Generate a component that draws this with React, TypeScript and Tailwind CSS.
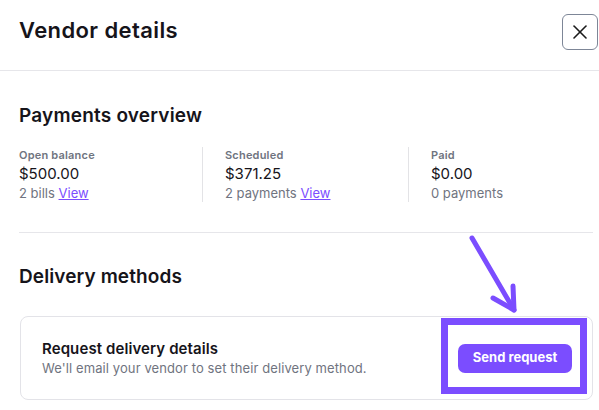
import { X } from "lucide-react";

const stats = [
  { label: "Open balance", amount: "$500.00", sub: "2 bills", link: true },
  { label: "Scheduled", amount: "$371.25", sub: "2 payments", link: true },
  { label: "Paid", amount: "$0.00", sub: "0 payments", link: false },
];

export default function App() {
  return (
    <div className="relative w-[599px] h-[410px] overflow-hidden bg-white text-[#16141a] font-['Inter',sans-serif]">
      {/* Header */}
      <div className="flex items-start justify-between h-[71px] pt-[14px] pl-[19px] pr-[1px] border-b border-[#e6e6ea]">
        <h1 className="text-[22px] font-semibold leading-[32px] tracking-[0.4px]">Vendor details</h1>
        <button className="w-[36px] h-[36px] rounded-[6px] border border-[#7d8697] flex items-center justify-center">
          <X className="w-[24px] h-[24px] text-[#1a1a1a]" strokeWidth={1.6} />
        </button>
      </div>

      <div className="pl-[19px] pr-[6px]">
        {/* Payments overview */}
        <div className="pt-[31px] pb-[30px] border-b border-[#e6e6ea]">
          <h2 className="text-[19px] font-semibold leading-[28px] tracking-[0.2px]">Payments overview</h2>
          <div className="flex mt-[17px]">
            {stats.map((s, i) => (
              <div
                key={s.label}
                className={
                  i === 0
                    ? "w-[184px] border-r border-[#e3e3e6]"
                    : i === 1
                    ? "w-[206px] pl-[22px] border-r border-[#e3e3e6]"
                    : "pl-[22px]"
                }
              >
                <div className="text-[11px] font-semibold text-[#6f7480] leading-[16px] tracking-[0.2px]">{s.label}</div>
                <div className="text-[15px] leading-[21px]">{s.amount}</div>
                <div className="text-[13px] text-[#707480] leading-[18px]">
                  {s.sub}{" "}
                  {s.link && <a className="text-[#7b4dff] underline">View</a>}
                </div>
              </div>
            ))}
          </div>
        </div>

        {/* Delivery methods */}
        <h2 className="text-[19px] font-semibold leading-[28px] mt-[30px] tracking-[0.1px]">Delivery methods</h2>
        <div className="mt-[25px] ml-[1px] h-[84px] rounded-[8px] border border-[#e3e3e8] flex items-center justify-between pl-[21px] pr-[20px]">
          <div>
            <div className="text-[15px] font-semibold leading-[20px] tracking-[0.1px]">Request delivery details</div>
            <div className="text-[13px] text-[#707480] leading-[18px] tracking-[0.1px]">We'll email your vendor to set their delivery method.</div>
          </div>
          <button className="w-[114px] h-[29px] rounded-[7px] bg-[#7b4dff] text-white text-[13px] font-bold">
            Send request
          </button>
        </div>
      </div>

      {/* Annotation */}
      <div className="absolute left-[441px] top-[318px] w-[146px] h-[76px] border-[7px] border-[#7b4dff]" />
      <svg className="absolute left-0 top-0" width="599" height="410" viewBox="0 0 599 410">
        <g stroke="#7b4dff" strokeWidth="5" strokeLinecap="round" strokeLinejoin="round" fill="none">
          <path d="M472 238 L514 310" />
          <path d="M493 298 L514 310 L513 286" />
        </g>
      </svg>
    </div>
  );
}
